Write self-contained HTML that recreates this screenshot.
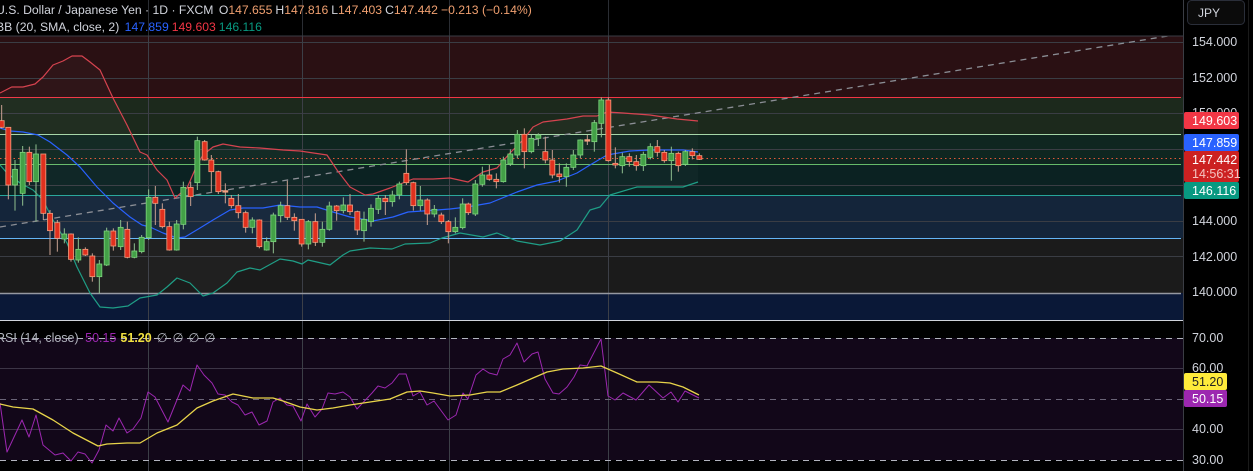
<!DOCTYPE html>
<html><head><meta charset="utf-8"><style>
html,body{margin:0;padding:0;background:#000;width:1253px;height:471px;overflow:hidden;font-family:"Liberation Sans",sans-serif}
svg{position:absolute;left:0;top:0}
.t{font-family:"Liberation Sans",sans-serif}
</style></head><body>
<svg id="s" width="1253" height="471" xmlns="http://www.w3.org/2000/svg">
<rect x="0" y="0" width="1253" height="471" fill="#000"/>
<rect x="0" y="36" width="1183" height="61" fill="#2a1013"/>
<rect x="0" y="97" width="1183" height="37" fill="#1c291c"/>
<rect x="0" y="134" width="1183" height="30" fill="#0f2620"/>
<rect x="0" y="164" width="1183" height="31" fill="#0b2222"/>
<rect x="0" y="195" width="1183" height="43" fill="#14253a"/>
<rect x="0" y="238" width="1183" height="55" fill="#1b1b1b"/>
<rect x="0" y="293" width="1183" height="27" fill="#0a1837"/>
<g stroke="#3a3d44" stroke-width="1">
<line x1="0" y1="42.5" x2="1183" y2="42.5"/><line x1="0" y1="78.5" x2="1183" y2="78.5"/>
<line x1="0" y1="113.5" x2="1183" y2="113.5"/><line x1="0" y1="149.5" x2="1183" y2="149.5"/>
<line x1="0" y1="185.5" x2="1183" y2="185.5"/><line x1="0" y1="221.5" x2="1183" y2="221.5"/>
<line x1="0" y1="256.5" x2="1183" y2="256.5"/>
</g>
<g stroke="#3c3f47"><line x1="148.5" y1="0" x2="148.5" y2="471"/><line x1="302.5" y1="0" x2="302.5" y2="471"/><line x1="449.5" y1="0" x2="449.5" y2="471"/><line x1="608.5" y1="0" x2="608.5" y2="471"/></g>
<line x1="0" y1="97.5" x2="1181" y2="97.5" stroke="#f23645"/>
<line x1="0" y1="134.5" x2="1181" y2="134.5" stroke="#a5d6a7"/>
<line x1="0" y1="164.5" x2="1181" y2="164.5" stroke="#66bb6a"/>
<line x1="0" y1="195.5" x2="1181" y2="195.5" stroke="#26a69a"/>
<line x1="0" y1="238.5" x2="1181" y2="238.5" stroke="#64b5f6"/>
<line x1="0" y1="293.5" x2="1181" y2="293.5" stroke="#9598a1" stroke-width="1.5"/>
<line x1="0" y1="158.5" x2="1183" y2="158.5" stroke="#e05a3a" stroke-dasharray="1.5 3"/>
<line x1="0" y1="227" x2="1180" y2="34" stroke="#8a8d94" stroke-width="1.3" stroke-dasharray="6 5"/>
<g id="bb"></g>
<g id="c"></g>
<rect x="0" y="0" width="1183" height="36" fill="#000"/>
<line x1="148.5" y1="0" x2="148.5" y2="36" stroke="#2a2d33"/><line x1="302.5" y1="0" x2="302.5" y2="36" stroke="#2a2d33"/>
<line x1="449.5" y1="0" x2="449.5" y2="36" stroke="#2a2d33"/><line x1="608.5" y1="0" x2="608.5" y2="36" stroke="#2a2d33"/>
<line x1="0" y1="36" x2="1183" y2="36" stroke="#3a3d44"/>
<text x="-4" y="14" font-size="12.2" class="t" fill="#d1d4dc">U.S. Dollar / Japanese Yen · 1D · FXCM <tspan dx="2">O</tspan><tspan fill="#f0a070">147.655</tspan><tspan dx="3">H</tspan><tspan fill="#f0a070">147.816</tspan><tspan dx="3">L</tspan><tspan fill="#f0a070">147.403</tspan><tspan dx="3">C</tspan><tspan fill="#f0a070">147.442</tspan><tspan dx="3" fill="#f0a070">−0.213 (−0.14%)</tspan></text>
<text x="-4" y="31" font-size="12.2" class="t" fill="#d1d4dc">BB (20, SMA, close, 2) <tspan dx="2" fill="#2962ff">147.859</tspan><tspan dx="3" fill="#f23645">149.603</tspan><tspan dx="3" fill="#089981">146.116</tspan></text>
<line x1="0" y1="320.5" x2="1253" y2="320.5" stroke="#d1d4dc" stroke-width="1"/>
<rect x="0" y="338" width="1183" height="122" fill="#120719"/>
<g stroke="#3c3546"><line x1="0" y1="368.5" x2="1183" y2="368.5"/><line x1="0" y1="429.5" x2="1183" y2="429.5"/></g>
<g stroke="#3c3f47"><line x1="148.5" y1="321" x2="148.5" y2="471"/><line x1="302.5" y1="321" x2="302.5" y2="471"/><line x1="449.5" y1="321" x2="449.5" y2="471"/><line x1="608.5" y1="321" x2="608.5" y2="471"/></g>
<line x1="0" y1="338.5" x2="1183" y2="338.5" stroke="#b2b5be" stroke-dasharray="6 5"/>
<line x1="0" y1="460.5" x2="1183" y2="460.5" stroke="#b2b5be" stroke-dasharray="6 5"/>
<line x1="0" y1="399.5" x2="1183" y2="399.5" stroke="#6a6478" stroke-dasharray="6 5"/>
<g id="rsi"></g>
<text x="-4" y="342" font-size="12.5" class="t" fill="#b2b5be">RSI (14, close) <tspan dx="3" fill="#9c27b0">50.15</tspan><tspan dx="4" fill="#f0e040" font-weight="bold">51.20</tspan><tspan dx="5">∅</tspan><tspan dx="5">∅</tspan><tspan dx="5">∅</tspan><tspan dx="5">∅</tspan></text>
<rect x="1184" y="0" width="69" height="471" fill="#000"/>
<line x1="1183.5" y1="0" x2="1183.5" y2="471" stroke="#3a3d44"/>
<line x1="1248.5" y1="0" x2="1248.5" y2="471" stroke="#1a1a1a"/>
<rect x="1187.5" y="0.5" width="57" height="24" rx="4" fill="#0b0b0b" stroke="#2a2e39"/>
<text x="1198" y="17" font-size="12" class="t" fill="#d1d4dc">JPY</text>
<g font-size="12.5" class="t" fill="#d1d4dc">
<text x="1192" y="46">154.000</text><text x="1192" y="82">152.000</text><text x="1192" y="117">150.000</text>
<text x="1192" y="225">144.000</text><text x="1192" y="261">142.000</text><text x="1192" y="296">140.000</text>
<text x="1192" y="342">70.00</text><text x="1192" y="372">60.00</text><text x="1192" y="433">40.00</text><text x="1192" y="464">30.00</text>
</g>
<rect x="1184" y="112" width="55" height="17" rx="2" fill="#f23645"/>
<text x="1192" y="125" font-size="12.5" class="t" fill="#fff">149.603</text>
<rect x="1184" y="134" width="55" height="17" rx="2" fill="#2962ff"/>
<text x="1192" y="147" font-size="12.5" class="t" fill="#fff">147.859</text>
<rect x="1184" y="151" width="55" height="31" rx="2" fill="#cc2121"/>
<text x="1192" y="164" font-size="12.5" class="t" fill="#fff">147.442</text>
<text x="1192" y="178" font-size="12.5" class="t" fill="#f4c4c0">14:56:31</text>
<rect x="1184" y="182" width="55" height="17" rx="2" fill="#089981"/>
<text x="1192" y="195" font-size="12.5" class="t" fill="#fff">146.116</text>
<rect x="1184" y="373" width="43" height="17" rx="2" fill="#ffeb3b"/>
<text x="1192" y="386" font-size="12.5" class="t" fill="#222">51.20</text>
<rect x="1184" y="390" width="43" height="17" rx="2" fill="#9c27b0"/>
<text x="1192" y="403" font-size="12.5" class="t" fill="#fff">50.15</text>
</svg>
<script>
var NS="http://www.w3.org/2000/svg";
function el(p,t,a){var e=document.createElementNS(NS,t);for(var k in a)e.setAttribute(k,a[k]);p.appendChild(e);return e;}
var z4=[[5,'r',242,262,195,265],[25,'r',262,435,262,478],[45,'g',388,435,360,512],[68,'g',337,460,318,497],[88,'r',337,425,320,435],[108,'g',342,425,313,545],[130,'r',342,520,342,540],[150,'r',520,572,510,645],[172,'r',548,595,540,635],[193,'g',582,597,565,610],[213,'r',582,658,580,665],[235,'g',628,660,592,668],[256,'r',628,645,622,648],[277,'r',648,710,640,725],[298,'g',672,710,660,760],[320,'g',573,675,563,678],[340,'r',573,618,565,632],[362,'g',562,620,540,630],[382,'r',568,652,545,655],[403,'g',633,652,610,655],[425,'g',592,635,585,640],[446,'g',472,593,448,600],[466,'r',472,490,438,555],[487,'r',508,560,490,565],[508,'r',560,630,545,632],[530,'g',552,630,540,632],[550,'g',442,553,425,568],[572,'r',442,470,425,498],[592,'g',302,428,290,450],[614,'r',305,360,300,362],[634,'r',360,395,345,455],[655,'r',395,455,392,462],[676,'d',452,456,430,490],[694,'r',475,497,465,505],[715,'r',497,518,462,535],[737,'r',518,562,512,578],[757,'g',540,562,532,580],[778,'r',540,620,538,625],[800,'g',605,630,592,632],[820,'g',525,605,518,640],[842,'g',497,527,485,547],[862,'r',497,532,422,540],[883,'r',532,542,520,572],[905,'r',538,612,537,620],[925,'g',545,612,540,628],[946,'r',545,607,520,618],[967,'g',568,607,545,620],[988,'g',498,568,485,572],[1010,'r',498,512,495,542],[1030,'g',495,512,472,520],[1050,'r',495,515,462,525],[1072,'r',515,570,512,585]];
var z5=[[42,'g',538,572,515,605],[63,'g',505,545,493,560],[85,'g',475,508,465,522],[106,'r',475,485,465,525],[127,'g',465,485,452,500],[148,'g',432,465,425,478],[169,'r',400,428,328,435],[190,'r',428,497,425,512],[211,'g',480,497,438,512],[232,'r',480,522,475,555],[253,'g',508,522,495,532],[274,'r',525,545,518,552],[295,'r',545,575,540,610],[316,'g',562,575,532,580],[338,'g',492,563,475,568],[355,'r',492,518,488,525],[376,'g',432,522,420,528],[397,'g',405,433,380,440],[418,'r',405,418,375,422],[439,'r',418,425,400,445],[460,'g',360,425,350,428],[481,'g',342,372,328,378],[502,'g',283,345,270,355],[523,'r',283,335,265,385],[544,'g',295,335,285,340],[565,'g',285,295,280,318],[586,'r',335,360,290,370],[607,'r',360,405,330,415],[628,'r',402,410,370,428],[649,'g',382,410,370,440],[670,'g',345,382,330,390],[691,'g',300,345,298,355],[712,'d',299,301,285,315],[733,'g',248,305,240,335],[754,'g',180,250,172,292],[775,'r',180,362,172,365],[796,'r',370,375,322,385],[817,'g',350,377,338,400],[838,'r',350,365,340,380],[859,'r',365,377,345,392],[880,'g',343,377,335,393],[901,'g',320,352,310,358],[922,'r',320,337,300,350],[943,'r',337,362,330,368],[964,'g',340,362,320,422],[985,'r',340,377,335,395],[1006,'g',335,373,330,378],[1027,'r',335,347,325,358],[1048,'r',347,358,340,360]];
var cg=document.getElementById('c');
function draw(arr,ox){arr.forEach(function(d){var x=ox+d[0]/3,t=40+d[2]/3,b=40+d[3]/3,wt=40+d[4]/3,wb=40+d[5]/3;
var f=d[1]=='g'?'#43a047':'#e0301e',s=d[1]=='g'?'#7ed47e':'#f4a080';if(d[1]=='d'){f='#f4a080';s='#f4a080';}
el(cg,'line',{x1:x,y1:wt,x2:x,y2:wb,stroke:d[1]=='g'?'#8fbf8f':'#c8a090','stroke-width':1});
el(cg,'rect',{x:x-2.5,y:t,width:5,height:Math.max(1.5,b-t),fill:f,stroke:s,'stroke-width':0.8});});}
draw(z4,0);draw(z5,350);
function pl(g,pts,c,w){el(g,'polyline',{points:pts.map(function(p){return p.join(',')}).join(' '),fill:'none',stroke:c,'stroke-width':w||1.2,'stroke-linejoin':'round'});}
var up=[[0,93],[11.7,87],[23,87],[35,84],[43,77],[53,65],[63,61],[72,56],[82,56],[90,62],[100,70],[113,98],[127,125],[140,152],[147,155],[157,170],[167,180],[175,198],[187,188],[197,165],[203,155],[213,147],[223,144],[240,147],[260,148],[283,150],[300,151],[327,155],[337,170],[350,187],[365,195],[373,194],[390,188],[413,179],[433,179],[450,178],[468,182],[483,172],[497,168],[510,153],[523,140],[533,127],[543,122],[567,119],[583,116],[597,116],[607,112],[623,113],[650,115],[677,119],[698,121]];
var mid=[[0,128],[10,131],[23,132],[38,135],[50,142],[67,155],[80,167],[97,187],[113,203],[130,217],[142,225],[150,227],[163,233],[177,238],[185,237],[200,228],[213,220],[230,210],[243,208],[263,208],[280,205],[300,207],[317,207],[333,212],[350,217],[373,221],[393,217],[408,212],[437,210],[450,209],[467,207],[490,203],[517,192],[537,185],[557,181],[577,173],[590,165],[607,155],[630,151],[650,150],[683,150],[698,152]];
var lo=[[0,165],[7,173],[20,183],[33,190],[43,200],[53,220],[67,243],[77,267],[90,293],[100,307],[113,308],[128,306],[140,298],[157,295],[167,287],[177,278],[190,283],[203,296],[213,293],[227,283],[237,272],[250,268],[260,270],[280,259],[293,261],[302,264],[308,260],[330,265],[343,255],[350,251],[370,248],[392,249],[405,244],[430,243],[442,238],[460,233],[483,237],[497,233],[517,241],[540,245],[560,241],[577,230],[590,210],[600,207],[610,195],[637,187],[667,187],[683,187],[698,182]];
var bb=document.getElementById('bb');
var fillPts=up.concat(lo.slice().reverse());
el(bb,'polygon',{points:fillPts.map(function(p){return p.join(',')}).join(' '),fill:'rgba(255,255,255,0.022)'});
pl(bb,up,'#d6434f');pl(bb,mid,'#2962ff');pl(bb,lo,'#1f9e86');
var r=document.getElementById('rsi');
var rl=[[0,403],[7,452],[22,420],[29,437],[36,415],[43,445],[55,455],[63,453],[71,461],[78,452],[85,454],[92,463],[99,450],[106,425],[113,431],[119,418],[127,433],[133,429],[141,418],[148,392],[155,397],[168,422],[183,385],[190,391],[197,365],[204,375],[212,383],[218,394],[225,395],[232,402],[238,405],[245,415],[252,412],[259,425],[267,421],[273,402],[280,398],[287,405],[293,406],[301,421],[307,404],[315,417],[322,409],[328,393],[335,394],[343,392],[350,397],[357,409],[372,393],[378,386],[385,388],[392,383],[399,374],[406,374],[413,396],[420,392],[427,405],[434,401],[448,420],[456,415],[463,393],[468,399],[476,375],[483,369],[489,373],[497,375],[503,359],[510,355],[517,343],[524,362],[532,354],[538,352],[545,379],[553,393],[559,394],[567,387],[574,377],[580,365],[587,366],[601,339],[608,396],[615,400],[623,393],[636,400],[649,385],[663,398],[671,392],[678,402],[685,391],[699,398]];
var ma=[[0,404],[13,407],[33,409],[53,420],[73,433],[98,446],[107,444],[127,443],[140,443],[157,433],[177,425],[197,408],[213,401],[233,394],[253,398],[273,398],[283,401],[300,407],[317,410],[333,408],[350,405],[370,402],[390,399],[407,392],[420,391],[433,393],[450,396],[470,395],[487,392],[500,392],[517,385],[533,378],[547,372],[563,369],[583,368],[601,366],[617,373],[637,382],[657,382],[670,383],[683,387],[699,395]];
pl(r,rl,'#9c27b0',1);pl(r,ma,'#e8d44a',1.3);
</script>
</body></html>
